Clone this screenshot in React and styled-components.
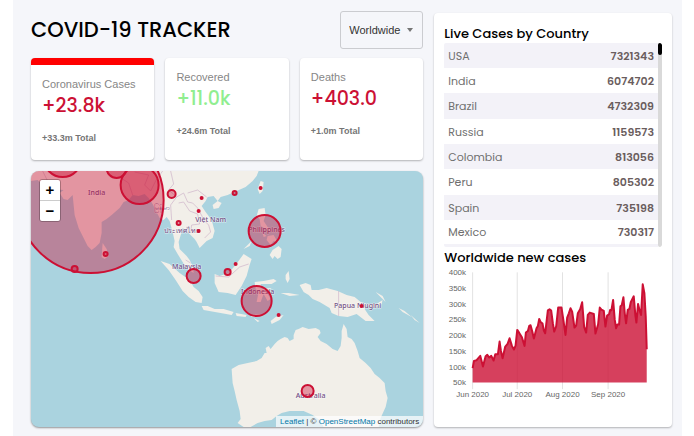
import React from "react";
import styled, { createGlobalStyle } from "styled-components";

const display = `Poppins, Inter, "Noto Sans", sans-serif`;
const body = `"Liberation Sans", Arial, sans-serif`;

const GlobalStyle = createGlobalStyle`
  * { box-sizing: border-box; }
  body { margin: 0; background: #fff; font-family: ${body}; }
`;

const Page = styled.main`
  display: grid;
  grid-template-columns: minmax(0, 1.65fr) minmax(0, 1fr);
  gap: 11px;
  min-height: 100vh;
  margin: 0 12px 0 13px;
  padding: 11px 10px 9px 18px;
  background: #f5f6fa;
`;

const Column = styled.div`
  display: flex;
  flex-direction: column;
`;

const Header = styled.header`
  display: flex;
  align-items: center;
  justify-content: space-between;
  height: 38px;
  margin-bottom: 9px;
`;

const Title = styled.h1`
  margin: 0;
  font: 500 21px/32px ${display};
  color: #000;
`;

const SelectBox = styled.div`
  display: grid;
  align-items: center;
  height: 38px;
  width: 83px;
`;

const RegionSelect = styled.select`
  grid-area: 1 / 1;
  appearance: none;
  width: 100%;
  height: 100%;
  padding: 0 8px;
  border: 1px solid #cbccd0;
  border-radius: 3px;
  background: transparent;
  font: 11px ${body};
  color: #333;
`;

const Caret = styled.svg`
  grid-area: 1 / 1;
  justify-self: end;
  margin-right: 9px;
  pointer-events: none;
`;

const Stats = styled.section`
  display: grid;
  grid-template-columns: repeat(3, minmax(0, 1fr));
  gap: 11px;
  margin-bottom: 11px;
`;

const Card = styled.article`
  background: #fff;
  border-radius: 4px;
  box-shadow: 0 1px 2px rgba(0, 0, 0, 0.28);
`;

const StatCard = styled(Card)`
  height: 102px;
  padding: 11px;
  border-top: ${(p) => (p.$active ? "7px solid red" : "0")};
`;

const StatLabel = styled.h2`
  margin: 0;
  font: 400 11px/16px ${body};
  white-space: nowrap;
  color: #868686;
`;

const StatValue = styled.p`
  margin: 0 0 12px;
  font: 500 19px/28px ${display};
  color: ${(p) => (p.$good ? "#90ee90" : "#cc1034")};
`;

const StatTotal = styled.p`
  margin: 0;
  font: 700 9px/12px ${body};
  color: #757575;
`;

const MapFrame = styled.section`
  position: relative;
  flex: 1;
  min-height: 256px;
  overflow: hidden;
  border-radius: 8px;
  background: #aad3df;
  box-shadow: 0 1px 2px rgba(0, 0, 0, 0.4);
`;

const MapDrawing = styled.svg`
  position: absolute;
  inset: 0;
  width: 100%;
  height: 100%;
`;

const PlaceName = styled.text`
  font: 500 7px "Noto Sans", "DejaVu Sans", sans-serif;
  text-anchor: middle;
  fill: #714f83;
  stroke: #fff;
  stroke-opacity: 0.6;
  stroke-width: 1px;
  paint-order: stroke;
`;

const ZoomControl = styled.div`
  position: absolute;
  top: 8px;
  left: 8px;
  display: flex;
  flex-direction: column;
  border: 1px solid rgba(0, 0, 0, 0.25);
  border-radius: 3px;
  overflow: hidden;
`;

const ZoomButton = styled.button`
  width: 20px;
  height: 20px;
  padding: 0;
  border: 0;
  background: #fff;
  font: 700 15px/20px ${body};
  color: #000;
  & + & {
    height: 21px;
    border-top: 1px solid #ccc;
  }
`;

const Attribution = styled.div`
  position: absolute;
  right: 0;
  bottom: 0;
  padding: 0 4px;
  background: rgba(255, 255, 255, 0.7);
  font: 8px/11px ${body};
  color: #333;
  white-space: nowrap;
`;

const MapLink = styled.a`
  color: #0078a8;
  text-decoration: none;
`;

const SidePanel = styled(Card)`
  margin-top: 2px;
  padding: 11px 10px;
`;

const PanelTitle = styled.h2`
  margin: 0;
  font: 500 13px/19px ${display};
  color: #000;
`;

const TableArea = styled.div`
  display: flex;
  margin-bottom: 1px;
  border-radius: 2px;
  overflow: hidden;
`;

const CountryTable = styled.table`
  flex: 1;
  border-collapse: collapse;
  border-bottom: 3px solid #f3f2f8;
  font: 400 11px/16px ${display};
  color: #6a5d5d;
`;

const CountryRow = styled.tr`
  height: 25px;
  &:nth-child(3n) { height: 26px; }
  &:nth-child(odd) { background: #f3f2f8; }
`;

const Country = styled.th`
  padding: 0 4px;
  font-weight: 400;
  text-align: left;
  color: #6f6f6f;
`;

const Count = styled.td`
  padding: 0 4px;
  font-weight: 600;
  text-align: right;
`;

const Track = styled.div`
  width: 4px;
  border-radius: 2px;
  background: #d9d9d9;
`;

const Thumb = styled.div`
  height: 12px;
  border-radius: 2px;
  background: #000;
`;

const Chart = styled.svg`
  display: block;
  width: 100%;
  height: auto;
`;

const AxisText = styled.text`
  font: 8px ${body};
  fill: #666;
  text-anchor: ${(p) => (p.$end ? "end" : "middle")};
`;

const stats = [
  { label: "Coronavirus Cases", value: "+23.8k", total: "+33.3m Total", active: true },
  { label: "Recovered", value: "+11.0k", total: "+24.6m Total", good: true },
  { label: "Deaths", value: "+403.0", total: "+1.0m Total" },
];

const countries = [
  ["USA", 7321343], ["India", 6074702], ["Brazil", 4732309], ["Russia", 1159573],
  ["Colombia", 813056], ["Peru", 805302], ["Spain", 735198], ["Mexico", 730317],
];

const land = [
  // Asia
  "M31 171V181L38 180 43 185 53 189 64 190 60 193 64 199 68 200 73 195 75 215 79 228 84 238 88 246 92 250 96 247 100 243 102 233 102 222 107 219 112 215 120 208 124 202 129 200 133 195 139 196 145 194 149 198 153 204 157 212 160 218 164 220 167 217 170 221 173 232 175 241 174 247 178 254 183 262 188 269 194 273 193 266 190 260 187 256 183 252 180 249 179 242 182 232 183 228 187 231 191 235 195 239 197 242 200 248 207 241 213 238 215 231 212 220 206 212 202 206 206 201 208 197 214 196 218 201 221 197 228 195 237 191 246 187 253 181 257 176 259 171Z",
  "M103 243L107 249 109 256 105 259 102 257Z",
  "M213 205L218 201 222 203 219 208 214 209Z",
  "M258 189L261 181 264 182 263 191 260 194Z",
  // Philippines
  "M259 209L265 208 266 215 264 221 268 227 272 230 270 232 265 228 261 226 260 219 257 216Z",
  "M268 236L274 235 278 242 274 241 271 245 267 240ZM273 250L279 246 282 249 281 257 278 259 275 256 273 259 270 255ZM244 249L252 241 250 246ZM263 233L267 236 264 237Z",
  // Borneo and Sulawesi
  "M215 274L220 276 229 273 236 265 244 254 252 259 250 265 247 276 242 286 236 295 228 293 219 292 215 283Z",
  "M255 282L264 281 274 279 277 281 272 284 261 284 262 289 272 288 267 292 271 299 268 301 264 294 261 302 257 302 259 292 256 289Z",
  // Sumatra, Java and the islands east
  "M161 261L170 264 180 273 190 280 194 287 199 291 203 297 202 303 196 302 189 297 183 291 176 280 169 270Z",
  "M202 306L208 306 215 309 224 309 234 312 232 315 221 313 204 310ZM236 313L247 315 246 317 237 316ZM251 315L262 314 264 316 252 317ZM271 321L276 317 284 315 280 320 272 324ZM254 318L260 321 258 322Z",
  "M286 275L289 271 290 279 288 283 286 279ZM281 293L289 293 300 295 290 296Z",
  // New Guinea
  "M300 285L306 283 311 285 312 290 319 290 327 288 338 291 347 295 355 297 361 302 367 304 365 309 369 315 375 321 366 321 357 314 348 317 339 316 332 313 330 308 320 302 313 299 309 295 304 292Z",
  "M368 304L377 304 383 300 382 304 375 308 368 306ZM376 292L383 296 386 302 382 298ZM391 303L397 307ZM399 308L405 311 412 317 403 312ZM411 315L420 323 415 320Z",
  // Australia
  "M232 369L239 365 248 363 257 361 262 358 265 353 267 353 266 348 269 346 271 349 275 344 278 341 281 339 285 337 288 338 290 341 294 339 294 335 296 330 299 329 303 327 309 329 316 328 320 330 321 333 318 337 321 341 327 344 333 349 338 351 341 346 342 338 342 331 344 324 347 329 348 337 352 339 355 343 358 351 360 358 366 363 371 368 375 374 380 378 385 383 386 391 388 398 386 407 381 418 379 427H324L320 420 313 415 304 411 290 411 282 413 277 416 272 420 265 421 258 423 251 427H244L238 423 241 419 240 411 237 400 235 391 233 383Z",
];

const borders = [
  "M43 171L48 181 55 185M125 171L123 179 129 183 133 195M135 172L149 175 145 185 151 191 156 181 163 171M171 171L174 184 169 190 177 197 171 205 172 220",
  "M177 197L184 193 188 202 193 203 198 208 205 221 209 225 211 232 205 238M179 203L184 202 190 211 198 214 200 224 192 225 191 233M188 193L198 190 207 197M216 276L229 277 240 267 249 264M339 291V316M186 260L191 263",
];

const places = [
  ["India", 97, 195], ["မြန်မာ", 162, 210], ["Việt Nam", 211, 222], ["ประเทศไทย", 182, 233],
  ["Philippines", 267, 232], ["Malaysia", 187, 269], ["Indonesia", 258, 294],
  ["Papua Niugini", 358, 308], ["Australia", 311, 398],
];

const outbreaks = [
  [91, 200, 73], [140, 185, 19], [63, 158, 19], [117, 168, 10], [106, 254, 2], [75, 269, 3],
  [172, 194, 4], [202, 198, 1], [199, 211, 1], [179, 223, 2], [199, 231, 1], [235, 193, 2],
  [261, 188, 1], [265, 231, 16], [194, 276, 7], [228, 272, 3], [236, 264, 1], [257, 301, 15],
  [279, 315, 1], [362, 306, 1], [308, 391, 6],
];

const trend =
  "128,370 132,348 140,346 151,333 159,365 167,334 172,330 178,338 184,333 191,347 196,328 204,328 209,290 213,318 218,340 226,305 233,297 239,280 246,303 252,314 257,302 262,255 268,264 276,277 284,303 288,263 294,258 298,243 302,241 307,259 312,281 320,250 324,243 328,222 332,231 338,236 342,257 346,265 354,196 359,193 364,197 369,235 373,260 379,244 385,188 395,188 401,228 407,270 412,218 417,205 422,190 427,200 434,248 439,242 444,205 451,193 457,172 463,246 469,263 474,210 480,203 492,207 497,266 505,238 510,188 515,194 522,198 527,245 532,212 538,208 541,195 545,196 550,165 555,225 559,250 563,239 568,239 572,184 576,181 581,157 585,205 589,235 594,195 599,192 603,172 612,154 617,212 620,233 625,177 629,194 634,210 639,118 644,145 648,215 651,313";

const yTicks = ["400k", "350k", "300k", "250k", "200k", "150k", "100k", "50k"];
const xTicks = [["Jun 2020", 128], ["Jul 2020", 262], ["Aug 2020", 398], ["Sep 2020", 535]];

function WorldMap() {
  return (
    <MapFrame aria-label="Map of cases">
      <MapDrawing viewBox="31 171 393 256" preserveAspectRatio="xMidYMid slice">
        <g fill="#f2efe9">
          {land.map((d) => <path key={d} d={d} />)}
        </g>
        <g fill="none" stroke="#ceb5ca" strokeWidth="0.7">
          {borders.map((d) => <path key={d} d={d} />)}
        </g>
        {places.map(([name, x, y]) => <PlaceName key={name} x={x} y={y}>{name}</PlaceName>)}
        <g fill="#cc1034" fillOpacity="0.4" stroke="#cc1034" strokeWidth="2">
          {outbreaks.map(([x, y, r]) => <circle key={`${x}-${y}`} cx={x} cy={y} r={r} />)}
        </g>
      </MapDrawing>
      <ZoomControl>
        <ZoomButton aria-label="Zoom in">+</ZoomButton>
        <ZoomButton aria-label="Zoom out">−</ZoomButton>
      </ZoomControl>
      <Attribution>
        <MapLink href="https://leafletjs.com">Leaflet</MapLink> | ©{" "}
        <MapLink href="https://www.openstreetmap.org/copyright">OpenStreetMap</MapLink> contributors
      </Attribution>
    </MapFrame>
  );
}

function CasesChart() {
  return (
    <Chart viewBox="0 0 218 134" role="img" aria-label="Worldwide new cases">
      {yTicks.map((t, i) => <AxisText key={t} $end x="22" y={8 + i * 15.8}>{t}</AxisText>)}
      {xTicks.map(([t, x]) => <AxisText key={t} x={x / 3 - 14} y="130">{t}</AxisText>)}
      <g transform="translate(-14 -22) scale(0.3333)">
        <g stroke="#e2e2e2" strokeWidth="3">
          {xTicks.map(([t, x]) => <path key={t} d={`M${x} 82V433`} />)}
        </g>
        <polygon points={`128,413 ${trend} 651,413`} fill="#cc1034" fillOpacity="0.8" />
        <polyline points={trend} fill="none" stroke="#cc1034" strokeWidth="6" strokeLinejoin="round" />
      </g>
    </Chart>
  );
}

export default function App() {
  return (
    <>
      <GlobalStyle />
      <Page>
        <Column>
          <Header>
            <Title>COVID-19 TRACKER</Title>
            <SelectBox>
              <RegionSelect aria-label="Region" defaultValue="worldwide">
                <option value="worldwide">Worldwide</option>
              </RegionSelect>
              <Caret width="8" height="4" viewBox="0 0 8 4" aria-hidden="true">
                <path d="M1 0H7L4 4Z" fill="#757575" />
              </Caret>
            </SelectBox>
          </Header>
          <Stats>
            {stats.map((s) => (
              <StatCard key={s.label} $active={s.active}>
                <StatLabel>{s.label}</StatLabel>
                <StatValue $good={s.good}>{s.value}</StatValue>
                <StatTotal>{s.total}</StatTotal>
              </StatCard>
            ))}
          </Stats>
          <WorldMap />
        </Column>
        <SidePanel as="aside">
          <PanelTitle>Live Cases by Country</PanelTitle>
          <TableArea>
            <CountryTable>
              <tbody>
                {countries.map(([name, count]) => (
                  <CountryRow key={name}>
                    <Country scope="row">{name}</Country>
                    <Count>{count}</Count>
                  </CountryRow>
                ))}
              </tbody>
            </CountryTable>
            <Track><Thumb /></Track>
          </TableArea>
          <PanelTitle>Worldwide new cases</PanelTitle>
          <CasesChart />
        </SidePanel>
      </Page>
    </>
  );
}
